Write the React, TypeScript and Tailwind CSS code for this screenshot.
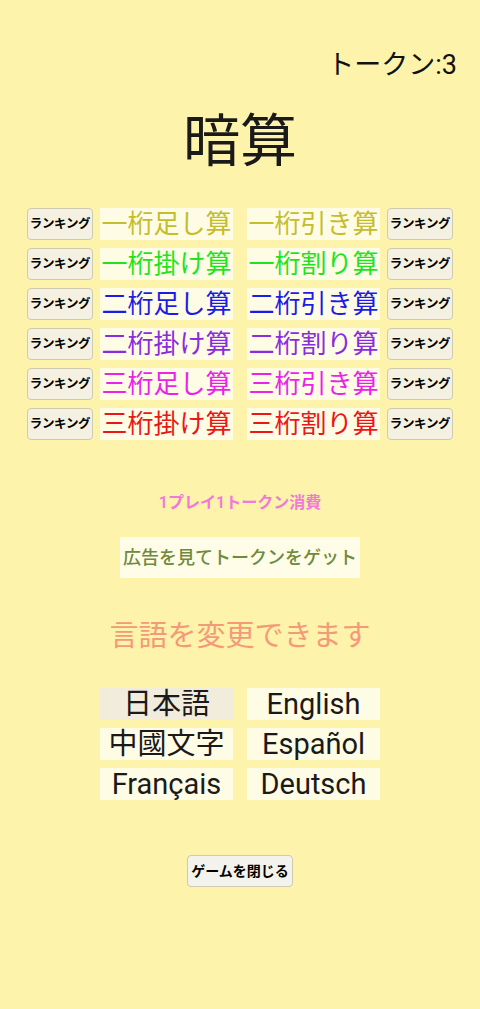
import React from "react";

const font = { fontFamily: 'Roboto, "Noto Sans CJK JP", sans-serif' };

const games: { left: string; right: string; color: string }[] = [
  { left: "一桁足し算", right: "一桁引き算", color: "text-[#c4bd2c]" },
  { left: "一桁掛け算", right: "一桁割り算", color: "text-[#1ee41e]" },
  { left: "二桁足し算", right: "二桁引き算", color: "text-[#1c1ce8]" },
  { left: "二桁掛け算", right: "二桁割り算", color: "text-[#8a2be2]" },
  { left: "三桁足し算", right: "三桁引き算", color: "text-[#ea22ea]" },
  { left: "三桁掛け算", right: "三桁割り算", color: "text-[#ec1616]" },
];

const langs = ["日本語", "English", "中國文字", "Español", "Français", "Deutsch"];

function RankButton() {
  return (
    <button className="w-[66px] h-8 rounded-[4px] border border-[#cfcab0] bg-[#f4f1e2] text-[12.5px] font-semibold text-black tracking-tight whitespace-nowrap">
      ランキング
    </button>
  );
}

function GameLabel({ text, color }: { text: string; color: string }) {
  return (
    <button className={`w-[133px] h-8 bg-[#fffce6] text-[26px] leading-8 whitespace-nowrap ${color}`}>
      {text}
    </button>
  );
}

export default function App() {
  return (
    <div className="min-h-screen w-full bg-[#fdf3aa] flex flex-col items-center" style={font}>
      <div className="w-full flex justify-end pr-[23px] pt-[49px]">
        <span className="text-[27px] leading-8 text-[#111]">トークン:3</span>
      </div>

      <h1 className="mt-[29px] text-[57px] leading-[64px] text-[#1a1a1a]">暗算</h1>

      <div className="mt-[34px] flex flex-col gap-2">
        {games.map((g) => (
          <div key={g.left} className="flex items-center">
            <RankButton />
            <div className="ml-[7px]">
              <GameLabel text={g.left} color={g.color} />
            </div>
            <div className="ml-[14px]">
              <GameLabel text={g.right} color={g.color} />
            </div>
            <div className="ml-[7px]">
              <RankButton />
            </div>
          </div>
        ))}
      </div>

      <p className="mt-[53px] text-[16px] leading-5 font-semibold text-[#f07ad8]">1プレイ1トークン消費</p>

      <button className="mt-[24px] w-[240px] h-[41px] bg-[#fffde8] text-[18px] font-medium text-[#6e8a3c]">
        広告を見てトークンをゲット
      </button>

      <p className="mt-[38px] text-[29px] leading-10 text-[#f49a78]">言語を変更できます</p>

      <div className="mt-[32px] grid grid-cols-[133px_133px] gap-x-[14px] gap-y-2">
        {langs.map((l, i) => (
          <button
            key={l}
            className={`h-8 text-[29px] leading-8 text-[#1a1a1a] whitespace-nowrap ${i === 0 ? "bg-[#f1ecdc]" : "bg-[#fffce6]"}`}
          >
            {l}
          </button>
        ))}
      </div>

      <button className="mt-[55px] w-[106px] h-8 rounded-[4px] border border-[#cfcab0] bg-[#f4f2ec] text-[14px] font-semibold text-black whitespace-nowrap">
        ゲームを閉じる
      </button>
    </div>
  );
}
